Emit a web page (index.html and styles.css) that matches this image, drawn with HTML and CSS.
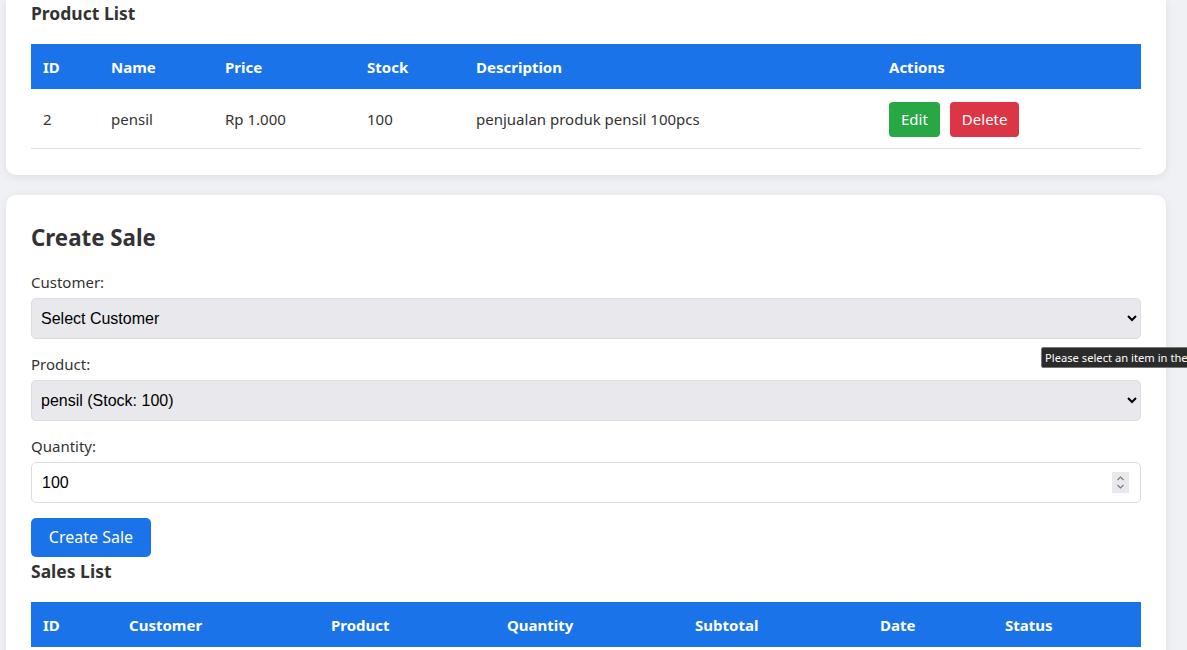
FILE: index.html
```html
<!DOCTYPE html>
<html lang="id">
<head>
<meta charset="utf-8">
<title>Sales</title>
<link rel="stylesheet" href="styles.css">
</head>
<body>
<div class="page">
  <section class="card card-top">
    <h3 class="section-title">Product List</h3>
    <table class="data-table">
      <colgroup>
        <col style="width:68px"><col style="width:114px"><col style="width:142px"><col style="width:109px"><col style="width:413px"><col style="width:264px">
      </colgroup>
      <thead>
        <tr><th>ID</th><th>Name</th><th>Price</th><th>Stock</th><th>Description</th><th>Actions</th></tr>
      </thead>
      <tbody>
        <tr>
          <td>2</td><td>pensil</td><td>Rp 1.000</td><td>100</td><td>penjualan produk pensil 100pcs</td>
          <td><div class="actions"><button class="btn btn-edit">Edit</button><button class="btn btn-delete">Delete</button></div></td>
        </tr>
      </tbody>
    </table>
  </section>

  <section class="card">
    <h2 class="form-title">Create Sale</h2>
    <form class="sale-form">
      <div class="form-group">
        <label class="form-label">Customer:</label>
        <div class="field-wrap">
          <select class="form-control select-control">
            <option>Select Customer</option>
          </select>
          <div class="tooltip">Please select an item in the list.</div>
        </div>
      </div>
      <div class="form-group">
        <label class="form-label">Product:</label>
        <select class="form-control select-control">
          <option>pensil (Stock: 100)</option>
        </select>
      </div>
      <div class="form-group">
        <label class="form-label">Quantity:</label>
        <div class="field-wrap">
          <input class="form-control input-control" type="number" value="100">
          <span class="spinner" aria-hidden="true">
            <svg width="17" height="21" viewBox="0 0 17 21">
              <path d="M5.5 8 L8.5 5 L11.5 8" fill="none" stroke="#7a7a7a" stroke-width="1.2"/>
              <path d="M5.5 13 L8.5 16 L11.5 13" fill="none" stroke="#7a7a7a" stroke-width="1.2"/>
            </svg>
          </span>
        </div>
      </div>
      <button type="button" class="btn btn-primary">Create Sale</button>
    </form>
    <h3 class="section-title sales-title">Sales List</h3>
    <table class="data-table">
      <colgroup>
        <col style="width:86px"><col style="width:202px"><col style="width:176px"><col style="width:188px"><col style="width:185px"><col style="width:125px"><col style="width:148px">
      </colgroup>
      <thead>
        <tr><th>ID</th><th>Customer</th><th>Product</th><th>Quantity</th><th>Subtotal</th><th>Date</th><th>Status</th></tr>
      </thead>
      <tbody></tbody>
    </table>
  </section>
</div>
</body>
</html>
```
FILE: styles.css
```css
html, body {
  overflow: hidden;
}
body {
  margin: 0;
  background: #f0f1f5;
  font-family: "Noto Sans", "Open Sans", sans-serif;
  color: #333;
  font-size: 16px;
}
.page {
  width: 1160px;
  margin: 0 0 0 6px;
  display: flex;
  flex-direction: column;
  gap: 20px;
}
.card {
  background: #fff;
  border-radius: 10px;
  padding: 25px;
  box-shadow: 0 2px 10px rgba(0, 0, 0, 0.08);
}
.card-top {
  padding-top: 0;
  padding-bottom: 26px;
  border-radius: 0 0 10px 10px;
}
.section-title {
  margin: 0 0 18px;
  font-size: 17.5px;
  line-height: 26px;
  font-weight: 700;
  color: #333;
}
.sales-title {
  margin-top: 1px;
}
.form-title {
  margin: 0 0 16px;
  font-size: 22.3px;
  line-height: 36px;
  font-weight: 700;
  color: #333;
}
.data-table {
  width: 1110px;
  border-collapse: collapse;
  table-layout: fixed;
}
.data-table th {
  background: #1a73e8;
  color: #fff;
  text-align: left;
  font-weight: 700;
  font-size: 15px;
  padding: 13px 12px 11px;
  line-height: 21px;
}
.data-table td {
  padding: 13px 12px 11px;
  line-height: 35px;
  font-size: 15px;
  border-bottom: 1px solid #ddd;
  white-space: nowrap;
}
.actions {
  display: flex;
  gap: 10px;
}
.btn {
  font-family: "Noto Sans", "Open Sans", sans-serif;
  font-size: 15px;
  color: #fff;
  border: none;
  border-radius: 4px;
  padding: 0 12px;
  height: 35px;
  line-height: 35px;
  cursor: pointer;
}
.btn-edit { background: #28a745; }
.btn-delete { background: #dc3545; }
.btn-primary {
  background: #1a73e8;
  height: 39px;
  width: 120px;
  border-radius: 5px;
  padding: 0;
  font-size: 16px;
}
.sale-form {
  display: flex;
  flex-direction: column;
  align-items: flex-start;
}
.form-group {
  width: 100%;
  margin-bottom: 15px;
  display: flex;
  flex-direction: column;
}
.form-label {
  font-size: 15px;
  line-height: 21px;
  margin-bottom: 5px;
  color: #333;
}
.field-wrap {
  position: relative;
}
.form-control {
  box-sizing: border-box;
  width: 100%;
  height: 41px;
  padding: 0 10px;
  border: 1px solid #ddd;
  border-radius: 5px;
  font-family: "Liberation Sans", Arial, sans-serif;
  font-size: 16px;
  color: #000;
}
.select-control {
  background: #e9e9ed;
  padding-left: 5px;
}
.input-control {
  background: #fff;
  appearance: textfield;
  -moz-appearance: textfield;
}
.input-control::-webkit-inner-spin-button,
.input-control::-webkit-outer-spin-button {
  -webkit-appearance: none;
  margin: 0;
}
.spinner {
  position: absolute;
  right: 12px;
  top: 10px;
  width: 17px;
  height: 21px;
  background: #e9e9ed;
  display: block;
}
.spinner svg {
  display: block;
}
.tooltip {
  position: absolute;
  left: 1010px;
  top: 49px;
  background: #2b2b2b;
  color: #fff;
  font-family: "Noto Sans", sans-serif;
  font-size: 11.2px;
  line-height: 19px;
  padding: 0 3px;
  border: 1px solid #777;
  border-radius: 2px;
  white-space: nowrap;
}
```
